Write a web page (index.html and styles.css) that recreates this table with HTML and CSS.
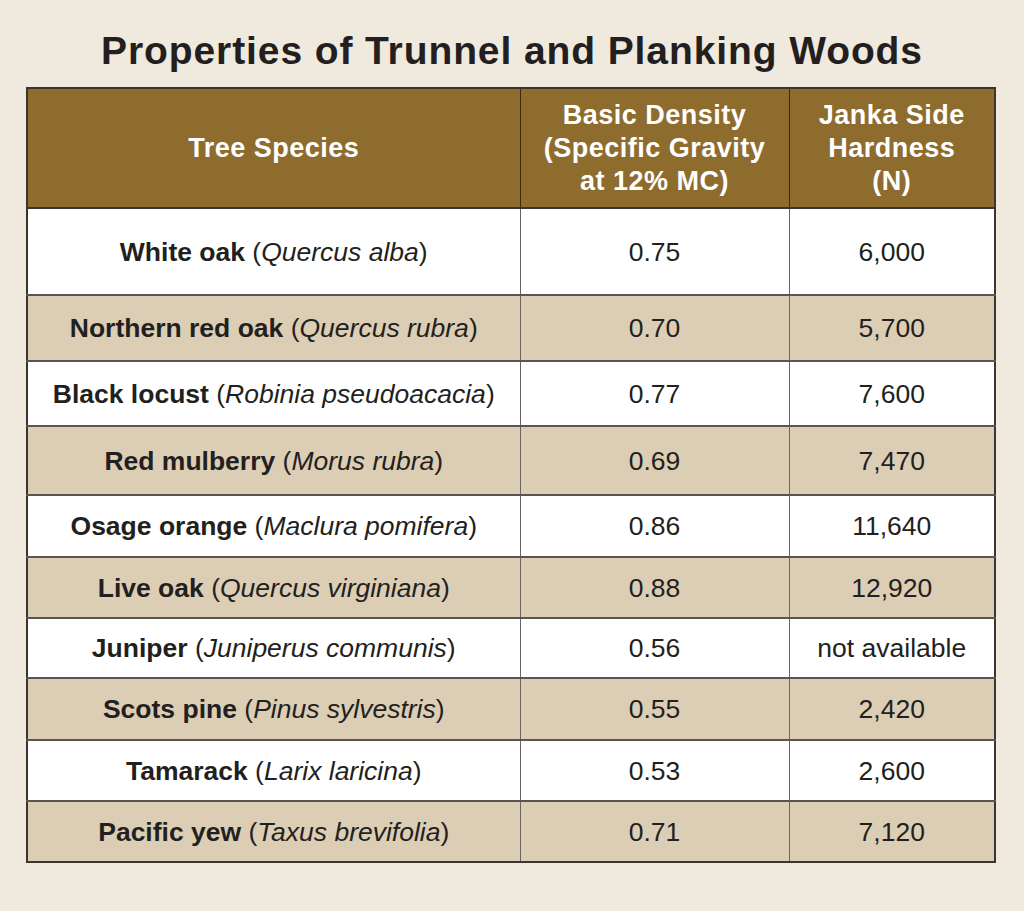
FILE: index.html
```html
<!DOCTYPE html>
<html lang="en">
<head>
<meta charset="utf-8">
<title>Properties of Trunnel and Planking Woods</title>
<link rel="stylesheet" href="styles.css">
</head>
<body>
<main class="page">
  <h1 class="title">Properties of Trunnel and Planking Woods</h1>
  <table class="woods">
    <colgroup>
      <col class="c-species">
      <col class="c-density">
      <col class="c-hardness">
    </colgroup>
    <thead>
      <tr>
        <th>Tree Species</th>
        <th>Basic Density<br>(Specific Gravity<br>at 12% MC)</th>
        <th>Janka Side<br>Hardness<br>(N)</th>
      </tr>
    </thead>
    <tbody>
      <tr><td><b>White oak</b> (<i>Quercus alba</i>)</td><td>0.75</td><td>6,000</td></tr>
      <tr><td><b>Northern red oak</b> (<i>Quercus rubra</i>)</td><td>0.70</td><td>5,700</td></tr>
      <tr><td><b>Black locust</b> (<i>Robinia pseudoacacia</i>)</td><td>0.77</td><td>7,600</td></tr>
      <tr><td><b>Red mulberry</b> (<i>Morus rubra</i>)</td><td>0.69</td><td>7,470</td></tr>
      <tr><td><b>Osage orange</b> (<i>Maclura pomifera</i>)</td><td>0.86</td><td>11,640</td></tr>
      <tr><td><b>Live oak</b> (<i>Quercus virginiana</i>)</td><td>0.88</td><td>12,920</td></tr>
      <tr><td><b>Juniper</b> (<i>Juniperus communis</i>)</td><td>0.56</td><td>not available</td></tr>
      <tr><td><b>Scots pine</b> (<i>Pinus sylvestris</i>)</td><td>0.55</td><td>2,420</td></tr>
      <tr><td><b>Tamarack</b> (<i>Larix laricina</i>)</td><td>0.53</td><td>2,600</td></tr>
      <tr><td><b>Pacific yew</b> (<i>Taxus brevifolia</i>)</td><td>0.71</td><td>7,120</td></tr>
    </tbody>
  </table>
</main>
</body>
</html>
```

FILE: styles.css
```css
html, body {
  margin: 0;
  padding: 0;
  background: #f0e9de;
}

body {
  width: 1024px;
  height: 911px;
  overflow: hidden;
  font-family: "Liberation Sans", Arial, sans-serif;
  color: #231f20;
}

.page {
  padding: 28px 0 0 26px;
}

.title {
  margin: 0 0 13px -26px;
  width: 1024px;
  text-align: center;
  font-size: 39px;
  line-height: 46px;
  font-weight: bold;
  letter-spacing: 0.9px;
  color: #231f20;
}

.woods {
  width: 968px;
  border-collapse: collapse;
  table-layout: fixed;
  border: 2px solid #3a3532;
}

.c-species { width: 493px; }
.c-density { width: 269px; }
.c-hardness { width: 206px; }

.woods th {
  background: #8e6c2e;
  color: #ffffff;
  font-size: 27px;
  line-height: 33px;
  font-weight: bold;
  letter-spacing: 0.5px;
  height: 118px;
  padding: 0;
  text-align: center;
  vertical-align: middle;
  border-left: 1px solid #3a2a10;
  border-bottom: 2px solid #3a3532;
}

.woods td {
  font-size: 26.5px;
  line-height: 30px;
  padding: 0;
  text-align: center;
  vertical-align: middle;
  border-top: 2px solid #5a5452;
  border-left: 1.5px solid #6a6462;
}

.woods td b { font-weight: bold; }
.woods td i { font-style: italic; }

.woods tbody tr:nth-child(odd) { background: #ffffff; }
.woods tbody tr:nth-child(even) { background: #dccdb5; }

.woods tbody tr { height: 61px; }
.woods tbody tr:nth-child(1) { height: 87px; }
.woods tbody tr:nth-child(2) { height: 66px; }
.woods tbody tr:nth-child(3) { height: 65px; }
.woods tbody tr:nth-child(4) { height: 69px; }
.woods tbody tr:nth-child(5) { height: 62px; }
.woods tbody tr:nth-child(7) { height: 60px; }
.woods tbody tr:nth-child(8) { height: 62px; }
```
